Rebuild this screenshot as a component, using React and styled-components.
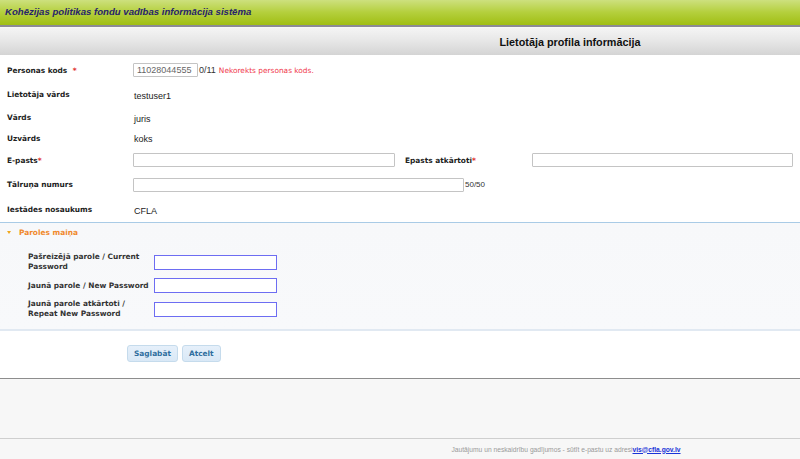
import React from 'react'
import styled, { createGlobalStyle } from 'styled-components'

const Global = createGlobalStyle`
  html, body {
    margin: 0;
    padding: 0;
    background: #f7f7f7;
    font-family: "DejaVu Sans", Verdana, sans-serif;
  }
`

const Page = styled.div`
  width: 800px;
  height: 459px;
  display: flex;
  flex-direction: column;
  overflow: hidden;
  background: #f7f7f7;
`

const TopBar = styled.div`
  height: 25px;
  background: linear-gradient(to bottom, #cde07e 0%, #b4cf3c 50%, #a0be14 100%);
  border-bottom: 2px solid #8c8a96;
  display: flex;
  align-items: center;
  padding-left: 5px;
`

const SystemName = styled.div`
  font-family: "Liberation Sans", Arial, sans-serif;
  font-style: italic;
  font-weight: bold;
  font-size: 9.6px;
  color: #27236b;
  margin-top: -3px;
`

const TitleBar = styled.div`
  margin-top: 1px;
  height: 27px;
  background: linear-gradient(to bottom, #f4f4f4 0%, #e6e6e6 50%, #d4d4d4 100%);
  display: flex;
  align-items: center;
  justify-content: center;
  padding-left: 340px;
`

const Title = styled.h1`
  margin: 0;
  font-family: "Liberation Sans", Arial, sans-serif;
  font-size: 10.8px;
  font-weight: bold;
  color: #111;
`

const Content = styled.div`
  background: #fff;
  border-bottom: 1px solid #8d8d8d;
  padding-top: 3px;
`

const Form = styled.div`
  padding: 0 7px;
`

const Row = styled.div`
  height: ${(p) => p.h}px;
  display: flex;
  align-items: center;
`

const Label = styled.div`
  width: ${(p) => p.w || 126}px;
  padding-left: ${(p) => p.pad || 0}px;
  flex-shrink: 0;
  font-size: 7.4px;
  font-weight: bold;
  color: #222;
`

const Req = styled.span`
  color: #e0302a;
  margin-left: ${(p) => (p.gap ? 3 : 0)}px;
`

const Value = styled.div`
  font-family: "Liberation Sans", Arial, sans-serif;
  font-size: 9px;
  color: #222;
  padding-left: 1px;
  margin-top: 2px;
`

const Input = styled.input`
  box-sizing: border-box;
  flex-shrink: 0;
  width: ${(p) => p.w}px;
  height: 14px;
  border: 1px solid #c4c4c4;
  border-radius: 1px;
  padding: 0 3px;
  margin: 0;
  font-family: "Liberation Sans", Arial, sans-serif;
  font-size: 9px;
  color: #666;
  background: #fff;
  outline: none;
`

const Counter = styled.span`
  font-family: "Liberation Sans", Arial, sans-serif;
  font-size: ${(p) => p.size || 9}px;
  color: #333;
  margin-left: 1px;
`

const Error = styled.span`
  font-size: 7.4px;
  color: #f0374a;
  margin-left: 3px;
`

const Section = styled.div`
  border-top: 1px solid #a9cbe6;
  border-bottom: 2px solid #e1e9f2;
  background: linear-gradient(to bottom, #f7f8fa, #f8f9fb);
  padding-bottom: 10px;
`

const SectionHead = styled.div`
  height: 18px;
  display: flex;
  align-items: center;
  padding-left: 7px;
  font-size: 7.4px;
  font-weight: bold;
  color: #f0892c;
`

const Arrow = styled.span`
  width: 0;
  height: 0;
  border-left: 2.5px solid transparent;
  border-right: 2.5px solid transparent;
  border-top: 3px solid #f0a81c;
  margin-right: 8px;
`

const PwdList = styled.div`
  display: flex;
  flex-direction: column;
  gap: 6px;
  padding: 11px 0 0 28px;
`

const PwdRow = styled.div`
  display: flex;
  align-items: center;
`

const PwdLabel = styled.div`
  width: 126px;
  font-size: 7.4px;
  font-weight: bold;
  color: #333;
  line-height: 10px;
`

const PwdInput = styled.input`
  box-sizing: border-box;
  width: 123px;
  height: 15px;
  border: 1px solid #6d6df2;
  margin: 0;
  background: #fff;
  outline: none;
`

const Buttons = styled.div`
  display: flex;
  gap: 4px;
  padding: 14px 0 16px 127px;
`

const Button = styled.button`
  height: 17px;
  padding: 0 ${(p) => p.px}px;
  border: 1px solid #c5dbec;
  border-radius: 3px;
  background: linear-gradient(to bottom, #e6f0fa, #d9e8f6);
  color: #2e6e9e;
  font-family: "DejaVu Sans", Verdana, sans-serif;
  font-size: 7.4px;
  font-weight: bold;
  cursor: pointer;
`

const Spacer = styled.div`
  flex: 1;
  border-bottom: 1px solid #cfcfcf;
`

const Footer = styled.div`
  height: 20px;
  display: flex;
  align-items: center;
  justify-content: center;
  padding-left: 332px;
  font-family: "Liberation Sans", Arial, sans-serif;
  font-size: 6.7px;
  color: #9a9a9a;
`

const Link = styled.a`
  color: #1a33d8;
  font-weight: bold;
  text-decoration: underline;
`

export default function App() {
  return (
    <Page>
      <Global />
      <TopBar>
        <SystemName>Kohēzijas politikas fondu vadības informācija sistēma</SystemName>
      </TopBar>
      <TitleBar>
        <Title>Lietotāja profila informācija</Title>
      </TitleBar>
      <Content>
        <Form>
          <Row h={24}>
            <Label>Personas kods <Req gap>*</Req></Label>
            <Input w={65} defaultValue="11028044555" />
            <Counter>0/11</Counter>
            <Error>Nekorekts personas kods.</Error>
          </Row>
          <Row h={25}>
            <Label>Lietotāja vārds</Label>
            <Value>testuser1</Value>
          </Row>
          <Row h={21}>
            <Label>Vārds</Label>
            <Value>juris</Value>
          </Row>
          <Row h={20}>
            <Label>Uzvārds</Label>
            <Value>koks</Value>
          </Row>
          <Row h={24}>
            <Label>E-pasts<Req>*</Req></Label>
            <Input w={262} />
            <Label w={127} pad={10}>Epasts atkārtoti<Req>*</Req></Label>
            <Input w={261} />
          </Row>
          <Row h={25}>
            <Label>Tālruņa numurs</Label>
            <Input w={331} />
            <Counter size={8}>50/50</Counter>
          </Row>
          <Row h={25}>
            <Label>Iestādes nosaukums</Label>
            <Value>CFLA</Value>
          </Row>
        </Form>
        <Section>
          <SectionHead>
            <Arrow />
            Paroles maiņa
          </SectionHead>
          <PwdList>
            <PwdRow>
              <PwdLabel>Pašreizējā parole / Current Password</PwdLabel>
              <PwdInput type="password" />
            </PwdRow>
            <PwdRow>
              <PwdLabel>Jaunā parole / New Password</PwdLabel>
              <PwdInput type="password" />
            </PwdRow>
            <PwdRow>
              <PwdLabel>Jaunā parole atkārtoti / Repeat New Password</PwdLabel>
              <PwdInput type="password" />
            </PwdRow>
          </PwdList>
        </Section>
        <Buttons>
          <Button px={6}>Saglabāt</Button>
          <Button px={6}>Atcelt</Button>
        </Buttons>
      </Content>
      <Spacer />
      <Footer>
        Jautājumu un neskaidrību gadījumos - sūtīt e-pastu uz adresi
        <Link href="#">vis@cfla.gov.lv</Link>
      </Footer>
    </Page>
  )
}
